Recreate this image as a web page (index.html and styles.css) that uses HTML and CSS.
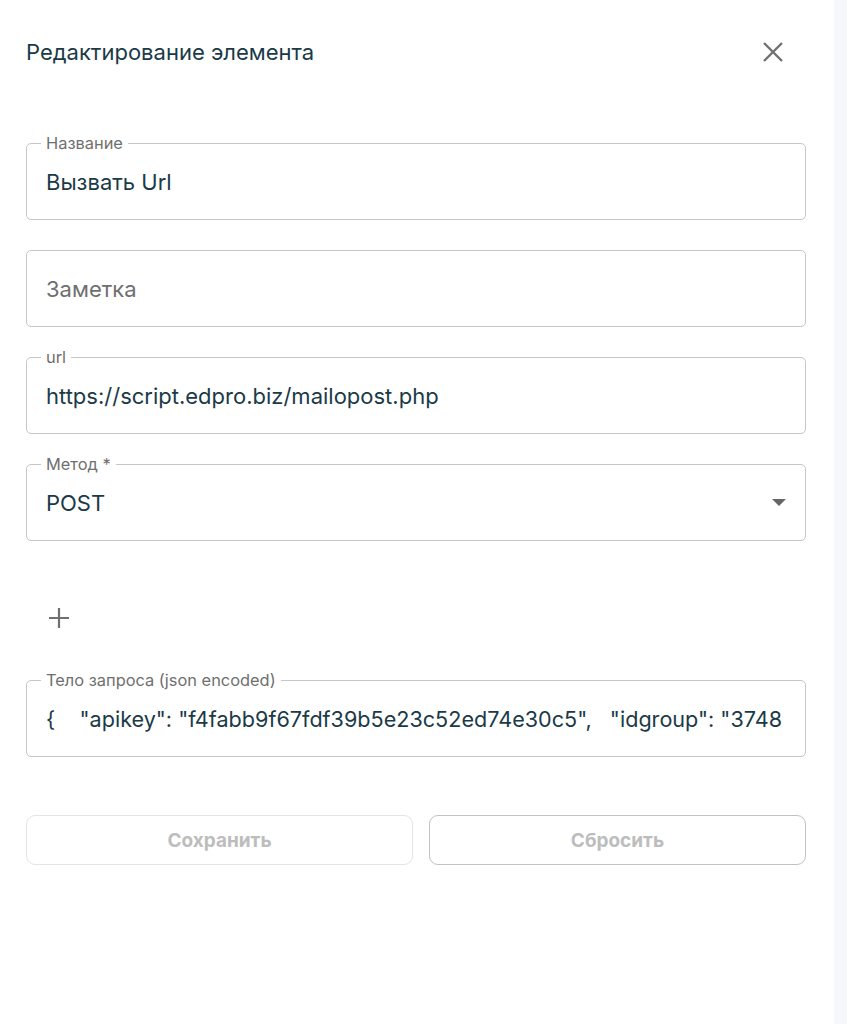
FILE: index.html
```html
<!DOCTYPE html>
<html lang="ru">
<head>
<meta charset="utf-8">
<title>Редактирование элемента</title>
<link rel="stylesheet" href="styles.css">
</head>
<body>
<div class="panel">
  <div class="header">
    <h1 class="title">Редактирование элемента</h1>
    <button class="close" aria-label="Закрыть">
      <svg width="20" height="20" viewBox="0 0 20 20"><path d="M1 1L19 19M19 1L1 19" stroke="#707070" stroke-width="2.4" fill="none"/></svg>
    </button>
  </div>

  <div class="fields">
    <div class="field">
      <span class="field-label">Название</span>
      <span class="field-value">Вызвать Url</span>
    </div>
    <div class="field">
      <span class="field-placeholder">Заметка</span>
    </div>
    <div class="field">
      <span class="field-label">url</span>
      <span class="field-value">https://script.edpro.biz/mailopost.php</span>
    </div>
    <div class="field field-select">
      <span class="field-label">Метод *</span>
      <span class="field-value">POST</span>
      <svg class="caret" width="14" height="7" viewBox="0 0 14 7"><path d="M0 0H14L7 7Z" fill="#666"/></svg>
    </div>
  </div>

  <div class="add-row">
    <svg width="20" height="20" viewBox="0 0 20 20"><path d="M10 0V20M0 10H20" stroke="#707070" stroke-width="2.2" fill="none"/></svg>
  </div>

  <div class="field field-body">
    <span class="field-label">Тело запроса (json encoded)</span>
    <span class="field-value body-value">{&nbsp;&nbsp;&nbsp; "apikey": "f4fabb9f67fdf39b5e23c52ed74e30c5",&nbsp;&nbsp;&nbsp;"idgroup": "3748</span>
  </div>

  <div class="actions">
    <button class="btn btn-save">Сохранить</button>
    <button class="btn btn-reset">Сбросить</button>
  </div>
</div>
</body>
</html>
```

FILE: styles.css
```css
* { box-sizing: border-box; }

html, body {
  margin: 0;
  height: 100%;
}

body {
  background: #f5f7fa;
  font-family: Inter, "Noto Sans", "Liberation Sans", sans-serif;
  color: #1b3a47;
}

.panel {
  width: 834px;
  height: 1024px;
  background: #ffffff;
  padding: 0 28px 0 26px;
}

.header {
  display: flex;
  align-items: center;
  justify-content: space-between;
  height: 104px;
}

.title {
  margin: 0;
  font-size: 22px;
  font-weight: 400;
  line-height: 26px;
  color: #1b3a47;
}

.close {
  border: none;
  background: transparent;
  padding: 0;
  width: 20px;
  height: 20px;
  margin-right: 23px;
  display: flex;
  cursor: pointer;
}

.fields {
  display: flex;
  flex-direction: column;
  gap: 30px;
  margin-top: 39px;
}

.field {
  position: relative;
  height: 77px;
  border: 1px solid #c6c6c6;
  border-radius: 5px;
  display: flex;
  align-items: center;
  padding: 0 19px;
}

.field-label {
  position: absolute;
  top: -10px;
  left: 14px;
  padding: 0 5px;
  background: #ffffff;
  font-size: 16.4px;
  line-height: 18px;
  color: #6f6f6f;
}

.field-value {
  font-size: 22px;
  line-height: 26px;
  color: #1b3a47;
}

.field-placeholder {
  font-size: 22px;
  line-height: 26px;
  color: #6f6f6f;
}

.body-value {
  font-size: 21.6px;
  white-space: nowrap;
  overflow: hidden;
}

.field-select {
  justify-content: space-between;
}

.add-row {
  height: 139px;
  display: flex;
  align-items: center;
  padding-left: 23px;
  padding-top: 14px;
}

.actions {
  display: grid;
  grid-template-columns: 387px 1fr;
  gap: 16px;
  margin-top: 58px;
}

.btn {
  height: 50px;
  background: #ffffff;
  border-radius: 9px;
  font-family: Inter, "Noto Sans", "Liberation Sans", sans-serif;
  font-size: 19px;
  font-weight: 700;
  color: #bdbdbd;
  cursor: default;
}

.btn-save {
  border: 1px solid #e4e4e4;
}

.btn-reset {
  border: 1px solid #c2c2c2;
}
```
